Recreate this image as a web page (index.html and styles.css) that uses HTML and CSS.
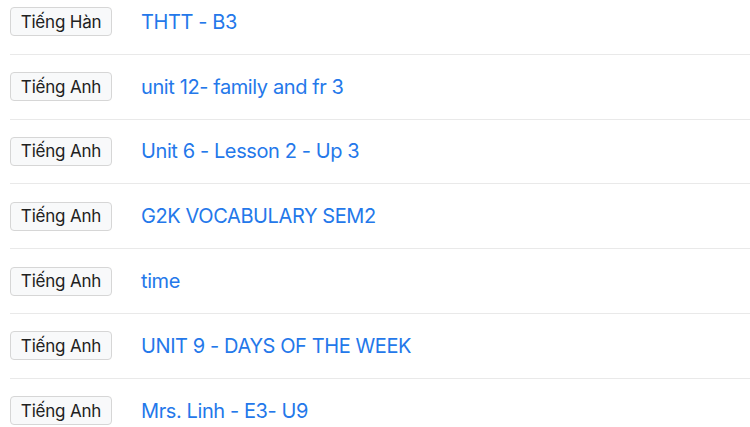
FILE: index.html
```html
<!DOCTYPE html>
<html lang="vi">
<head>
<meta charset="utf-8">
<link rel="stylesheet" href="styles.css">
</head>
<body>
<ul class="list">
  <li class="row"><span class="badge">Tiếng Hàn</span><a class="title" href="#">THTT - B3</a></li>
  <li class="row"><span class="badge">Tiếng Anh</span><a class="title" href="#">unit 12- family and fr 3</a></li>
  <li class="row"><span class="badge">Tiếng Anh</span><a class="title" href="#">Unit 6 - Lesson 2 - Up 3</a></li>
  <li class="row"><span class="badge">Tiếng Anh</span><a class="title" href="#">G2K VOCABULARY SEM2</a></li>
  <li class="row"><span class="badge">Tiếng Anh</span><a class="title" href="#">time</a></li>
  <li class="row"><span class="badge">Tiếng Anh</span><a class="title" href="#">UNIT 9 - DAYS OF THE WEEK</a></li>
  <li class="row"><span class="badge">Tiếng Anh</span><a class="title" href="#">Mrs. Linh - E3- U9</a></li>
</ul>
</body>
</html>
```
FILE: styles.css
```css
html, body {
  margin: 0;
  padding: 0;
  background: #fff;
  overflow: hidden;
}
body {
  font-family: Inter, "Noto Sans", sans-serif;
}
.list {
  list-style: none;
  margin: -10px 0 0 10px;
  padding: 0;
}
.row {
  display: flex;
  align-items: center;
  gap: 29px;
  height: 63.8px;
  border-bottom: 1px solid #e9e9e9;
}
.badge {
  box-sizing: border-box;
  width: 102px;
  height: 29px;
  display: flex;
  align-items: center;
  justify-content: center;
  background: #f8f9fa;
  border: 1px solid #d6d6d6;
  border-radius: 4px;
  color: #212121;
  font-size: 17px;
  letter-spacing: -0.2px;
}
.title {
  color: #2478ea;
  font-size: 20px;
  letter-spacing: -0.4px;
  text-decoration: none;
}
```
